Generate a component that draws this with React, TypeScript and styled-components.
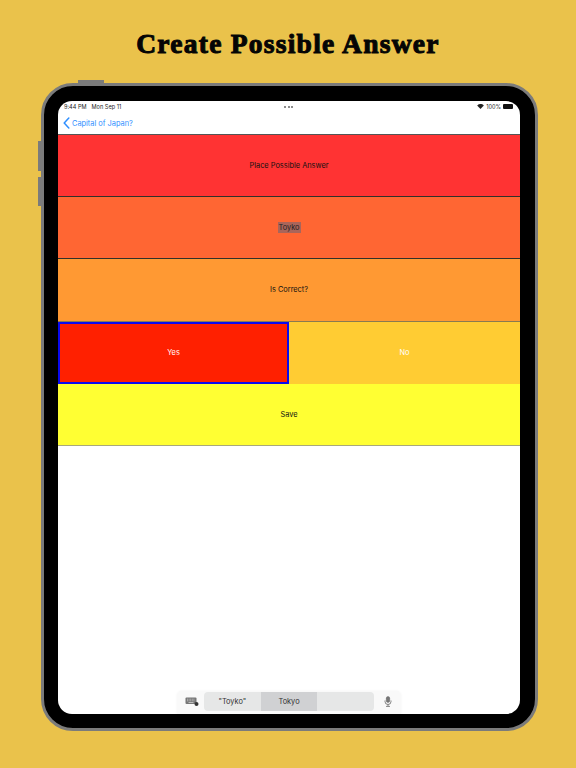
import React from 'react';
import styled, { createGlobalStyle } from 'styled-components';

const GlobalStyle = createGlobalStyle`
  html, body {
    margin: 0;
    padding: 0;
  }
  body {
    width: 576px;
    height: 768px;
    overflow: hidden;
    font-family: Inter, "Liberation Sans", Arial, sans-serif;
  }
`;

const S = {
  Page: styled.div`
    width: 576px;
    height: 768px;
    display: flex;
    flex-direction: column;
    align-items: center;
    background-color: #eac24b;
  `,
  Title: styled.h1`
    margin: 0;
    height: 83px;
    padding-top: 26px;
    box-sizing: border-box;
    font-family: "Liberation Serif", serif;
    font-size: 27.5px;
    line-height: 36px;
    font-weight: 700;
    letter-spacing: 1.25px;
    color: #050505;
    -webkit-text-stroke: 1px #050505;
  `,
  Device: styled.div`
    position: relative;
    box-sizing: border-box;
    width: 497px;
    height: 648px;
    margin-left: 3px;
    padding: 15px 15px 14px 14px;
    background-color: #000;
    border: 3px solid #7b7b7b;
    border-radius: 32px;
  `,
  HardButton: styled.div<{ $side: 'top' | 'left'; $at: number; $size: number }>`
    position: absolute;
    background-color: #7b7b7b;
    ${({ $side, $at, $size }) =>
      $side === 'top'
        ? `top: -6px; left: ${$at}px; width: ${$size}px; height: 3px;`
        : `left: -6px; top: ${$at}px; width: 3px; height: ${$size}px;`}
  `,
  Screen: styled.div`
    height: 100%;
    display: flex;
    flex-direction: column;
    overflow: hidden;
    background-color: #fff;
    border-radius: 14px;
  `,
  StatusBar: styled.div`
    height: 11px;
    padding: 0 7px 0 6px;
    display: flex;
    align-items: center;
    justify-content: space-between;
    font-size: 5.6px;
    color: #222;
  `,
  StatusGroup: styled.div`
    display: flex;
    align-items: center;
    gap: 5px;
    width: 70px;
    white-space: nowrap;
  `,
  StatusRight: styled.div`
    display: flex;
    align-items: center;
    justify-content: flex-end;
    gap: 2px;
    width: 70px;
  `,
  Dots: styled.div`
    display: flex;
    gap: 1.5px;
  `,
  Dot: styled.span`
    width: 2px;
    height: 2px;
    border-radius: 50%;
    background-color: #666;
  `,
  Battery: styled.span`
    width: 10px;
    height: 5px;
    border-radius: 1px;
    background-color: #111;
  `,
  NavBar: styled.div`
    height: 22px;
    padding-left: 5px;
    display: flex;
    align-items: center;
    gap: 2px;
    font-size: 7.4px;
    color: #2f8fff;
    border-bottom: 1px solid #555;
  `,
  Row: styled.div<{ $bg: string; $line?: string }>`
    box-sizing: border-box;
    height: 62.2px;
    flex: none;
    display: flex;
    align-items: center;
    justify-content: center;
    font-size: 7.4px;
    color: #111;
    background-color: ${({ $bg }) => $bg};
    border-bottom: 1px solid ${({ $line }) => $line ?? '#33302a'};
  `,
  Highlight: styled.span`
    padding: 1px;
    background-color: #a9655a;
    color: #222;
  `,
  ChoiceRow: styled.div`
    height: 62.2px;
    flex: none;
    display: flex;
  `,
  Choice: styled.div<{ $bg: string; $selected?: boolean }>`
    box-sizing: border-box;
    width: 50%;
    display: flex;
    align-items: center;
    justify-content: center;
    font-size: 7.4px;
    color: #fff;
    background-color: ${({ $bg }) => $bg};
    border: ${({ $selected }) => ($selected ? '2px solid #0a0af0' : 'none')};
  `,
  Spacer: styled.div`
    flex: 1;
  `,
  KeyboardBar: styled.div`
    align-self: center;
    box-sizing: border-box;
    width: 224px;
    height: 23px;
    padding: 1px 0 3px;
    display: flex;
    align-items: center;
    background-color: #f9f9f9;
    border-radius: 5px 5px 0 0;
    box-shadow: 0 0 3px rgba(0, 0, 0, 0.05);
  `,
  IconSlot: styled.div<{ $inset?: number }>`
    flex: none;
    width: 27px;
    box-sizing: border-box;
    padding-left: ${({ $inset }) => $inset ?? 0}px;
    display: flex;
    align-items: center;
    justify-content: center;
  `,
  Suggestions: styled.div`
    width: 170px;
    height: 19px;
    display: flex;
    overflow: hidden;
    border-radius: 4px;
    background-color: #e6e7e7;
  `,
  Suggestion: styled.div<{ $active?: boolean }>`
    flex: 1;
    display: flex;
    align-items: center;
    justify-content: center;
    font-size: 7.4px;
    color: #333;
    background-color: ${({ $active }) => ($active ? '#d0d1d3' : 'transparent')};
  `
};

const WifiIcon = () => (
  <svg width="7" height="5" viewBox="0 0 16 12">
    <path d="M8 12 L0 3.5 C4.5 -0.8 11.5 -0.8 16 3.5 Z" fill="#222" />
  </svg>
);

const BackIcon = () => (
  <svg width="7" height="12" viewBox="0 0 7 12" fill="none">
    <path d="M5.8 1 L1.2 6 L5.8 11" stroke="#2f8fff" strokeWidth="1.5" strokeLinecap="round" strokeLinejoin="round" />
  </svg>
);

const KeyboardIcon = () => (
  <svg width="14" height="9" viewBox="0 0 14 9">
    <rect x="0.5" y="0.5" width="11" height="6.5" rx="1" fill="#777" />
    <path d="M2 2.2h8M2 3.8h8" stroke="#ddd" strokeWidth="0.7" strokeDasharray="1 0.6" />
    <path d="M3.5 5.5h5" stroke="#ddd" strokeWidth="0.7" />
    <circle cx="11.5" cy="7" r="2" fill="#333" />
  </svg>
);

const MicIcon = () => (
  <svg width="8" height="11" viewBox="0 0 8 11" fill="none">
    <rect x="2.3" y="0.5" width="3.4" height="6" rx="1.7" fill="#777" stroke="#555" strokeWidth="0.4" />
    <path d="M1 4.5v1a3 3 0 0 0 6 0v-1M4 8.5v1.7M2 10.4h4" stroke="#555" strokeWidth="0.7" />
  </svg>
);

const App = () => {
  return (
    <S.Page>
      <GlobalStyle />
      <S.Title>Create Possible Answer</S.Title>
      <S.Device>
        <S.HardButton $side="top" $at={34} $size={26} />
        <S.HardButton $side="left" $at={55} $size={30} />
        <S.HardButton $side="left" $at={91} $size={29} />
        <S.Screen>
          <S.StatusBar>
            <S.StatusGroup>
              <span>9:44 PM</span>
              <span>Mon Sep 11</span>
            </S.StatusGroup>
            <S.Dots>
              <S.Dot />
              <S.Dot />
              <S.Dot />
            </S.Dots>
            <S.StatusRight>
              <WifiIcon />
              <span>100%</span>
              <S.Battery />
            </S.StatusRight>
          </S.StatusBar>
          <S.NavBar>
            <BackIcon />
            <span>Capital of Japan?</span>
          </S.NavBar>
          <S.Row $bg="#ff3333">Place Possible Answer</S.Row>
          <S.Row $bg="#ff6633">
            <S.Highlight>Toyko</S.Highlight>
          </S.Row>
          <S.Row $bg="#ff9933" $line="#8a7a50">Is Correct?</S.Row>
          <S.ChoiceRow>
            <S.Choice $bg="#ff2000" $selected>Yes</S.Choice>
            <S.Choice $bg="#ffcc33">No</S.Choice>
          </S.ChoiceRow>
          <S.Row $bg="#ffff33" $line="#a8a87a">Save</S.Row>
          <S.Spacer />
          <S.KeyboardBar>
            <S.IconSlot $inset={3}>
              <KeyboardIcon />
            </S.IconSlot>
            <S.Suggestions>
              <S.Suggestion>"Toyko"</S.Suggestion>
              <S.Suggestion $active>Tokyo</S.Suggestion>
              <S.Suggestion />
            </S.Suggestions>
            <S.IconSlot>
              <MicIcon />
            </S.IconSlot>
          </S.KeyboardBar>
        </S.Screen>
      </S.Device>
    </S.Page>
  );
};

export default App;
